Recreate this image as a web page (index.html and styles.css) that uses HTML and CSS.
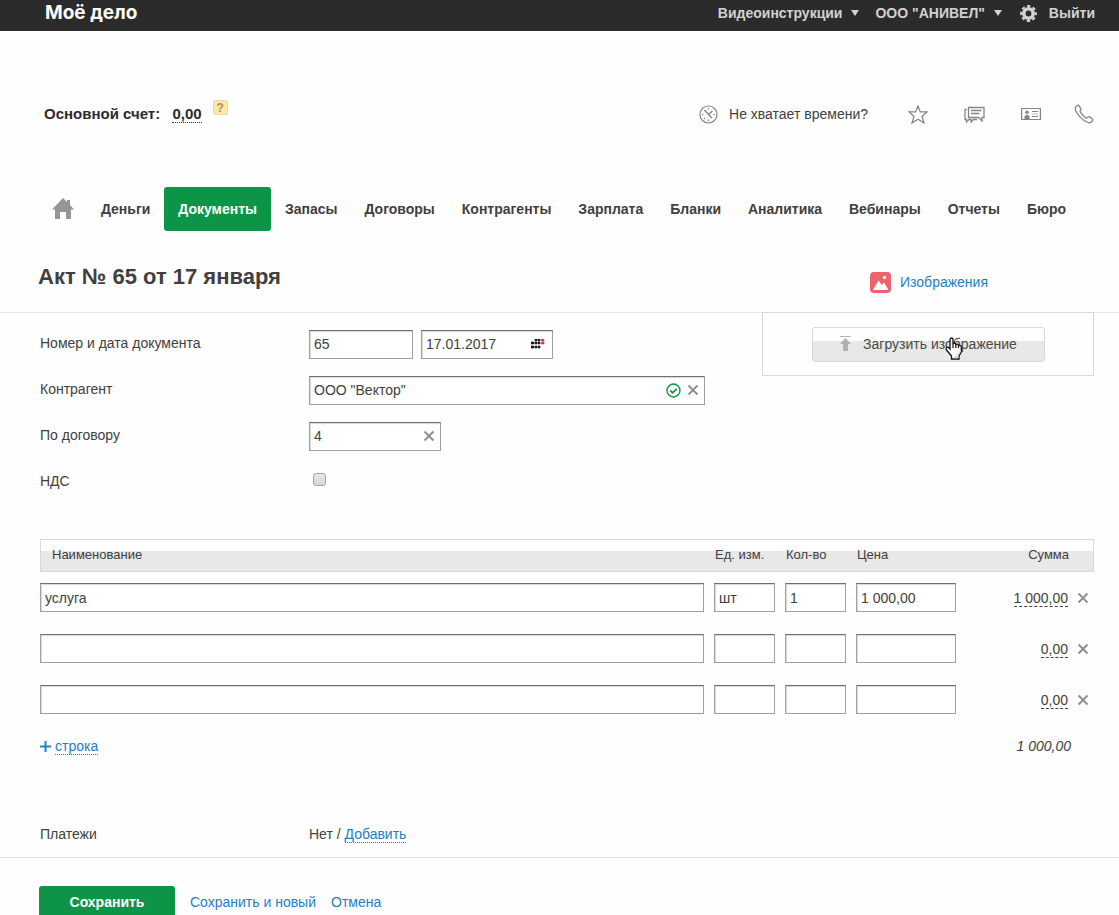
FILE: index.html
```html
<!DOCTYPE html>
<html lang="ru">
<head>
<meta charset="utf-8">
<title>Моё дело — Акт № 65</title>
<link rel="stylesheet" href="styles.css">
</head>
<body>
<svg class="defs" aria-hidden="true">
  <symbol id="cross" viewBox="0 0 12 12"><path d="M1.500 1.500l9 9M10.500 1.500l-9 9" stroke="#8c8c8c" stroke-width="1.800"/></symbol>
</svg>
<header class="topbar">
  <a class="logo" href="#">Моё дело</a>
  <div class="topmenu">
    <a class="drop" href="#">Видеоинструкции <i class="caret"></i></a>
    <a class="drop" href="#">ООО "АНИВЕЛ" <i class="caret"></i></a>
    <a class="gear" href="#" aria-label="Настройки"><svg width="17" height="17" viewBox="0 0 17 17"><circle cx="8.500" cy="8.500" r="4.700" fill="none" stroke="#d2d2d2" stroke-width="3.600"/><circle cx="8.500" cy="8.500" r="7.300" fill="none" stroke="#d2d2d2" stroke-width="2.200" stroke-dasharray="3.200 2.533" stroke-dashoffset="1.600"/></svg></a>
    <a href="#">Выйти</a>
  </div>
</header>

<div class="account">
  <b class="balance">Основной счет: <a class="amount" href="#">0,00</a></b>
  <button class="help" aria-label="Справка">?</button>
  <a class="time" href="#"><svg width="19" height="19" viewBox="0 0 19 19" fill="none" stroke="#858585" stroke-width="1.200"><circle cx="9.500" cy="9.500" r="8.500"/><path d="M5.500 5l4 4.500 4-3.500M9.500 9.500l3.500 3.500" stroke-width="1.400"/><path d="M9.500 3v1.500M9.500 14.500V16M3 9.500h1.500M14.500 9.500H16M5 14l1-1"/></svg>Не хватает времени?</a>
  <a class="tool" href="#" aria-label="Избранное"><svg width="20" height="19" viewBox="0 0 20 19" fill="none" stroke="#858585" stroke-width="1.300"><path d="M10 1l2.300 5.900h6.700l-5 4.500 2 6.600-6-3.700L4 18l2-6.600-5-4.500h6.700z"/></svg></a>
  <a class="tool" href="#" aria-label="Сообщения"><svg width="21" height="17" viewBox="0 0 21 17" fill="none" stroke="#858585" stroke-width="1.300"><path d="M4.500 1.500h15.500v10h-2v3.500l-3.500-3.500h-10zM7 4.500h10.500M7 7.500h8.500M2.800 3.500H1v10h1.500v2.500l2.500-2.500h2v2.500l2.500-2.500h3.500"/></svg></a>
  <a class="tool" href="#" aria-label="Контакты"><svg width="20" height="14" viewBox="0 0 20 14" fill="none" stroke="#858585" stroke-width="1.200"><path d="M.600 1.500h18.800v11H.600z"/><circle cx="6" cy="5.200" r="1.700" fill="#858585" stroke="none"/><path d="M3.500 12V9.500Q6 6 8.500 9.500V12z" fill="#858585" stroke="none"/><path d="M11 4.500h6M11 9.500h6"/><path d="M11 7h6" stroke="#c4c4c4"/></svg></a>
  <a class="tool phone" href="#" aria-label="Телефон"><svg width="20" height="20" viewBox="0 0 20 20" fill="none" stroke="#858585" stroke-width="1.300"><path d="M3.600 1.300L1.700 3.100C.500 5.500 3 9.800 6.200 13.100 9.500 16.400 14.500 19.600 16.700 18.500L18.700 16.500C19.100 15.900 18.900 15.300 18.400 15L15.500 12.900C14.900 12.500 14.300 12.600 13.800 13.100L12.800 14.100C11.500 14.300 6 8.600 6 7.100L6.700 6.400C7.200 5.900 7.200 5.400 6.900 4.900L5 1.700C4.700 1.100 4.100.900 3.600 1.300z"/></svg></a>
</div>

<nav class="nav">
  <a class="home" href="#" aria-label="Главная"><svg width="22" height="21" viewBox="0 0 22 21"><path d="M11 0l4 4V2h3v5l4 4.500h-3V21h-5v-7H8v7H3v-9.500H0z" fill="#959595"/></svg></a>
  <a href="#">Деньги</a>
  <a class="active" href="#">Документы</a>
  <a href="#">Запасы</a>
  <a href="#">Договоры</a>
  <a href="#">Контрагенты</a>
  <a href="#">Зарплата</a>
  <a href="#">Бланки</a>
  <a href="#">Аналитика</a>
  <a href="#">Вебинары</a>
  <a href="#">Отчеты</a>
  <a href="#">Бюро</a>
</nav>

<div class="heading">
  <h1>Акт № 65 от 17 января</h1>
  <a class="images" href="#"><svg width="21" height="21" viewBox="0 0 21 21"><rect width="21" height="21" rx="4" fill="#ee636a"/><path d="M3 18l5.500-9.500 3.300 4.500 2.200-2.500 4.500 7.500z" fill="#fff"/><circle cx="14.500" cy="5.500" r="1.700" fill="#fff"/></svg>Изображения</a>
</div>

<main class="document">
  <div class="top">
    <form class="fields">
      <label for="num">Номер и дата документа</label>
      <div class="pair">
        <input class="box number" id="num" value="65">
        <div class="box short"><input id="date" aria-label="Дата документа" value="17.01.2017"><svg width="14" height="10" viewBox="0 0 14 10" fill="#14141c"><path d="M4 0h2v2H4zM7 0h2v2H7zM0 3h3v2H0zM4 3h2v2H4zM7 3h2v2H7zM0 7h3v2H0zM4 7h2v2H4zM7 7h2v2H7z" stroke="#14141c" stroke-width=".600"/><path d="M10.500 0h2.500v2h-2.500zM10.500 3h2.500v2h-2.500z" fill="#f0283c" stroke="#f0283c" stroke-width=".600"/></svg></div>
      </div>
      <label for="partner">Контрагент</label>
      <div class="box partner"><input id="partner" value='ООО "Вектор"'><svg width="15" height="15" viewBox="0 0 15 15" fill="none" stroke="#0d9547"><circle cx="7.500" cy="7.500" r="6.500" stroke-width="1.400"/><path d="M4.300 7.500l2.300 2.300 4.200-4" stroke-width="1.800"/></svg><button class="clear" type="button" aria-label="Очистить"><svg width="12" height="12"><use href="#cross"/></svg></button></div>
      <label for="contract">По договору</label>
      <div class="box short"><input id="contract" value="4"><button class="clear" type="button" aria-label="Очистить"><svg width="12" height="12"><use href="#cross"/></svg></button></div>
      <label for="vat">НДС</label>
      <div class="check"><input id="vat" type="checkbox"></div>
    </form>
    <aside class="upload">
      <button class="upload-btn"><svg width="11" height="16" viewBox="0 0 11 16"><path d="M0 .500h11" stroke="#b4b4b4"/><path d="M5.500 2L11 8H8v7H3V8H0z" fill="#b0b0b0"/></svg>Загрузить изображение
        <svg class="cursor" width="18" height="23" viewBox="0 0 18 23"><path d="M5 12V2.500C5 .500 8 .500 8 2.500V7C8.500 5.700 10.700 6 10.800 7.500 11.500 6.700 13.400 7 13.500 8.500 14.500 8 16.300 8.500 16.300 10V15L14 19V22H6.500V19L1.500 13C.300 11 2.300 9.500 3.500 10.500z" fill="#fff" stroke="#111" stroke-width="1.300"/><path d="M15.600 13v2L13.300 18.700V21.300H8z" fill="#ddd"/><path d="M8 7v4M10.800 7.500V11M13.500 8.500V11" stroke="#111" stroke-width="1.200"/></svg></button>
    </aside>
  </div>

  <table class="items">
    <colgroup><col><col class="c-unit"><col class="c-unit"><col class="c-price"><col class="c-sum"><col class="c-del"></colgroup>
    <thead><tr><th>Наименование</th><th>Ед. изм.</th><th>Кол-во</th><th>Цена</th><th class="sum">Сумма</th><th></th></tr></thead>
    <tbody>
      <tr><td><input class="box" aria-label="Наименование" value="услуга"></td><td><input class="box" aria-label="Ед. изм." value="шт"></td><td><input class="box" aria-label="Кол-во" value="1"></td><td><input class="box" aria-label="Цена" value="1 000,00"></td><td class="sum"><a href="#">1 000,00</a></td><td class="del"><button class="clear" aria-label="Удалить"><svg width="12" height="12"><use href="#cross"/></svg></button></td></tr>
      <tr><td><input class="box" aria-label="Наименование"></td><td><input class="box" aria-label="Ед. изм."></td><td><input class="box" aria-label="Кол-во"></td><td><input class="box" aria-label="Цена"></td><td class="sum"><a href="#">0,00</a></td><td class="del"><button class="clear" aria-label="Удалить"><svg width="12" height="12"><use href="#cross"/></svg></button></td></tr>
      <tr><td><input class="box" aria-label="Наименование"></td><td><input class="box" aria-label="Ед. изм."></td><td><input class="box" aria-label="Кол-во"></td><td><input class="box" aria-label="Цена"></td><td class="sum"><a href="#">0,00</a></td><td class="del"><button class="clear" aria-label="Удалить"><svg width="12" height="12"><use href="#cross"/></svg></button></td></tr>
    </tbody>
  </table>
  <div class="totals">
    <span class="add"><svg width="11" height="11" viewBox="0 0 11 11"><path d="M5.500 0v11M0 5.500h11" stroke="#1a86cc" stroke-width="2"/></svg><a class="dotted" href="#">строка</a></span>
    <em>1 000,00</em>
  </div>
  <div class="payments"><span class="caption">Платежи</span><span>Нет / <a class="dotted" href="#">Добавить</a></span></div>
</main>

<footer class="actions">
  <button class="save">Сохранить</button>
  <a href="#">Сохранить и новый</a>
  <a href="#">Отмена</a>
</footer>
</body>
</html>
```
FILE: styles.css
```css
* { box-sizing: border-box; }
body {
  margin: 0;
  background: #fefefe;
  color: #404040;
  font: 14px/16px "Liberation Sans", Arial, sans-serif;
}
a { color: #1f7fc4; text-decoration: none; }
button, input { font: inherit; color: inherit; }
svg { display: block; flex: none; }
.defs { position: absolute; width: 0; height: 0; }

.topbar {
  display: flex;
  justify-content: space-between;
  align-items: center;
  height: 31px;
  padding: 0 24px 5px 45px;
  background: #2b2b2b;
}
.logo { color: #fff; font: bold 19px/24px Inter, "Liberation Sans", sans-serif; }
.topmenu { display: flex; align-items: center; gap: 16px; }
.topmenu a { color: #d2d2d2; font-weight: bold; font-size: 14px; }
.drop { display: flex; align-items: center; gap: 9px; }
.caret { border: 4px solid transparent; border-top: 6px solid #d2d2d2; border-bottom: 0; }
.topmenu .gear { margin: 0 -4px 0 2px; }

.account {
  display: flex;
  align-items: center;
  height: 24px;
  margin: 71px 25px 0 44px;
}
.balance { color: #2b2b2b; font-size: 15px; }
.amount { margin-left: 8px; color: inherit; border-bottom: 1px dotted; }
.help {
  align-self: flex-start;
  width: 15px;
  height: 15px;
  margin: -2px 0 0 11px;
  padding: 0;
  border: 1px solid #ead9a8;
  border-radius: 2px;
  background: #fbe7a9;
  color: #b3934a;
  font: bold 12px/12px "Liberation Sans", Arial, sans-serif;
}
.time { display: flex; align-items: center; gap: 11px; margin-left: auto; color: #404040; }
.tool { margin-left: 36px; }
.time + .tool { margin-left: 40px; }
.phone { margin-left: 33px; }

.nav {
  display: flex;
  justify-content: space-between;
  margin: 61px 40px 0 39px;
}
.nav a {
  display: flex;
  align-items: center;
  height: 44px;
  padding: 0 13px;
  border-radius: 3px;
  color: #404040;
  font-weight: bold;
}
.nav .active { padding: 0 14px; background: #0d9547; color: #fff; }
.nav .home { padding-bottom: 2px; }

.heading { display: flex; justify-content: space-between; height: 81px; padding: 0 131px 0 38px; }
h1 { margin: 33px 0 0; font-size: 22px; line-height: 26px; }
.images { display: flex; align-items: center; gap: 9px; margin-top: 21px; }

.document { border-top: 1px solid #e6e6e6; border-bottom: 1px solid #e6e6e6; padding: 0 25px 15px 40px; }
.top { display: flex; justify-content: space-between; align-items: flex-start; }
.fields {
  display: grid;
  grid-template-columns: 269px 396px;
  row-gap: 17px;
  padding-top: 17px;
}
.fields label { padding-top: 5px; }
.pair { display: flex; gap: 8px; }
.box {
  width: 100%;
  height: 29px;
  padding: 0 4px;
  border: 1px solid #a0a0a0;
  border-top-color: #6e6e6e;
  border-radius: 0;
  background: #fff;
  box-shadow: inset 1px 1px 1px #d8d8d8;
}
div.box { display: flex; align-items: center; }
.fields .box { padding-bottom: 1px; }
.box input { flex: 1; min-width: 0; padding: 0; border: 0; background: none; }
.number { width: 104px; }
.short { width: 132px; }
.pair .short { padding-right: 7px; }
.partner svg + .clear { margin-left: 6px; }
.clear { padding: 0; border: 0; background: none; }
.box .clear { margin-right: 1px; }
.check { height: 29px; padding: 5px 4px; }
.check input {
  display: block;
  appearance: none;
  width: 13px;
  height: 13px;
  margin: 0;
  border: 1px solid #a6a6a6;
  border-radius: 3px;
  background: linear-gradient(#e8e8e8, #d6d6d6);
}
.upload { width: 332px; margin-top: -1px; padding: 14px 48px 13px 49px; border: 1px solid #d9d9d9; }
.upload-btn {
  position: relative;
  display: flex;
  align-items: center;
  justify-content: center;
  gap: 12px;
  width: 100%;
  height: 35px;
  padding: 0 0 2px;
  border: 1px solid #d9d9d9;
  border-radius: 3px;
  background: linear-gradient(#fefefe 13px, #e8e8e8 13px);
  color: #4a4a4a;
}
.cursor { position: absolute; left: 132px; top: 9px; }

.items { width: 100%; margin-top: 42px; border-spacing: 0; table-layout: fixed; }
.c-unit { width: 71px; }
.c-price { width: 110px; }
.c-sum { width: 103px; }
.c-del { width: 25px; }
.items th {
  padding: 7px 0 8px 1px;
  border: 1px solid #d9d9d9;
  border-width: 1px 0;
  background: linear-gradient(#fefefe 11px, #e8e8e8 11px);
  font-weight: normal;
  font-size: 13px;
  text-align: left;
}
.items th:first-child { padding-left: 11px; border-left-width: 1px; }
.items th:last-child { border-right-width: 1px; }
.items .sum { text-align: right; }
.items td { padding: 11px 10px 11px 0; }
.items td .box { display: block; }
.items td.sum { padding-right: 1px; }
.items td.sum a { color: inherit; border-bottom: 1px dashed; }
.items td.del { padding-right: 5px; }
.items td.del .clear { display: block; margin-left: auto; }
.totals { display: flex; justify-content: space-between; margin-top: 13px; padding-right: 23px; }
.add { display: flex; align-items: center; gap: 4px; }
.dotted { border-bottom: 1px dotted; }
.payments { display: flex; margin-top: 71px; }
.caption { width: 269px; }

.actions { display: flex; align-items: center; gap: 15px; padding: 28px 39px 0; }
.save {
  width: 136px;
  height: 29px;
  padding: 3px 0 0;
  border: 0;
  border-radius: 3px 3px 0 0;
  background: #0d9547;
  color: #fff;
  font-weight: bold;
}
.actions a { padding-top: 3px; }
```
